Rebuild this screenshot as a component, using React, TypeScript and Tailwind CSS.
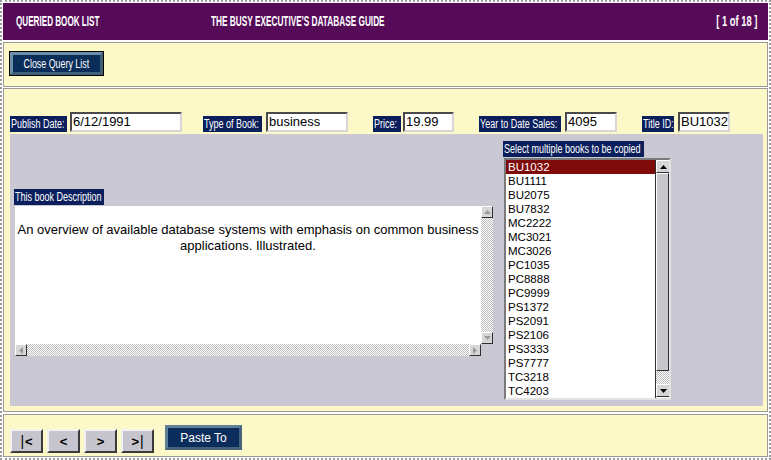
import React from 'react';

const books = [
  'BU1032', 'BU1111', 'BU2075', 'BU7832', 'MC2222', 'MC3021', 'MC3026', 'PC1035', 'PC8888',
  'PC9999', 'PS1372', 'PS2091', 'PS2106', 'PS3333', 'PS7777', 'TC3218', 'TC4203',
];

function Tri({ dir, faded }: { dir: 'up' | 'down' | 'left' | 'right'; faded?: boolean }) {
  const pts = {
    up: '0,4 3.5,0 7,4',
    down: '0,0 7,0 3.5,4',
    left: '4,0 4,7 0,3.5',
    right: '0,0 0,7 4,3.5',
  }[dir];
  const vertical = dir === 'up' || dir === 'down';
  return (
    <svg width={vertical ? 7 : 4} height={vertical ? 4 : 7} viewBox={vertical ? '0 0 7 4' : '0 0 4 7'}>
      <polygon points={pts} fill={faded ? '#9a9a9a' : '#000'} />
    </svg>
  );
}

function ArrowBtn({ dir, faded, big }: { dir: 'up' | 'down' | 'left' | 'right'; faded?: boolean; big?: boolean }) {
  return (
    <div
      className={`${big ? 'w-[14px] h-[13px]' : 'w-[12px] h-[12px]'} shrink-0 flex items-center justify-center bg-[#d6d6d6] border border-t-white border-l-white border-b-[#303030] border-r-[#303030]`}
    >
      <Tri dir={dir} faded={faded} />
    </div>
  );
}

const checker = 'bg-[repeating-conic-gradient(#bdbdbd_0_25%,#ffffff_0_50%)] bg-[length:2px_2px]';

function Label({ text, w }: { text: string; w: string }) {
  return (
    <div className={`${w} h-[16px] bg-[#0b1f5c] text-white text-[12px] leading-[16px] pl-[1px] overflow-hidden whitespace-nowrap shrink-0`}>
      <span className="inline-block origin-left scale-x-[0.75]">{text}</span>
    </div>
  );
}

function Field({ value, w }: { value: string; w: string }) {
  return (
    <div className={`${w} h-[20px] bg-white border-2 border-t-[#4a4a4a] border-l-[#4a4a4a] border-b-[#d6d6d6] border-r-[#d6d6d6] text-[13px] leading-[16px] pl-[1px] text-black whitespace-nowrap overflow-hidden shrink-0`}>
      {value}
    </div>
  );
}

function NavBtn({ children }: { children: React.ReactNode }) {
  return (
    <div className="w-[33px] h-[24px] flex items-center justify-center bg-[#c6c4cc] border-2 border-t-[#f2f2f2] border-l-[#f2f2f2] border-b-[#3a3a3a] border-r-[#3a3a3a] text-black text-[13px] font-bold leading-none">
      {children}
    </div>
  );
}

export default function App() {
  return (
    <div className="w-[771px] h-[460px] bg-white border-2 border-dotted border-[#9a9a9a] p-[1px] flex flex-col font-['Liberation_Sans',Arial,sans-serif] overflow-hidden">
      {/* Header */}
      <div className="h-[37px] shrink-0 bg-[#560b59] flex items-center text-white text-[14px] font-bold whitespace-nowrap">
        <div className="w-[208px] pl-[13px]">
          <span className="inline-block origin-left scale-x-[0.58]">QUERIED BOOK LIST</span>
        </div>
        <div className="flex-1">
          <span className="inline-block origin-left scale-x-[0.59]">THE BUSY EXECUTIVE'S DATABASE GUIDE</span>
        </div>
        <div className="pr-[11px]">
          <span className="inline-block origin-right scale-x-[0.67]">[ 1 of 18 ]</span>
        </div>
      </div>

      {/* Close button panel */}
      <div className="mt-[2px] h-[45px] shrink-0 bg-[#fcf8c8] border border-[#9a9a9a] pl-[5px] pt-[8px]">
        <div className="w-[95px] h-[25px] border border-black">
          <div className="w-full h-full bg-[#0b2d5a] border-[3px] border-t-[#6f8ea8] border-l-[#6f8ea8] border-b-[#40607a] border-r-[#40607a] flex items-center justify-center text-white text-[12px] whitespace-nowrap">
            <span className="inline-block scale-x-[0.74]">Close Query List</span>
          </div>
        </div>
      </div>

      {/* Main panel */}
      <div className="mt-[1px] h-[324px] shrink-0 bg-[#fcf8c8] border border-[#9a9a9a] pl-[6px] pt-[23px]">
        <div className="flex items-end h-[20px]">
          <Label text="Publish Date:" w="w-[57px]" />
          <div className="ml-[3px]"><Field value="6/12/1991" w="w-[112px]" /></div>
          <div className="ml-[21px]"><Label text="Type of Book:" w="w-[59px]" /></div>
          <div className="ml-[4px]"><Field value="business" w="w-[82px]" /></div>
          <div className="ml-[25px]"><Label text="Price:" w="w-[28px]" /></div>
          <div className="ml-[2px]"><Field value="19.99" w="w-[51px]" /></div>
          <div className="ml-[25px]"><Label text="Year to Date Sales:" w="w-[82px]" /></div>
          <div className="ml-[4px]"><Field value="4095" w="w-[52px]" /></div>
          <div className="ml-[25px]"><Label text="Title ID:" w="w-[32px]" /></div>
          <div className="ml-[4px]"><Field value="BU1032" w="w-[52px]" /></div>
        </div>

        <div className="mt-[2px] w-[753px] h-[272px] bg-[#cac8d3] flex">
          {/* Description */}
          <div className="w-[493px] shrink-0 pl-[4px] pt-[55px]">
            <Label text="This book Description" w="w-[90px]" />
            <div className="ml-[1px] mt-[1px] w-[478px]">
              <div className="flex">
                <div className="w-[466px] h-[138px] bg-white text-black text-[13px] leading-[16px] text-center pt-[16px] px-[1px]">
                  An overview of available database systems with emphasis on common business applications. Illustrated.
                </div>
                <div className="w-[12px] h-[138px] flex flex-col">
                  <ArrowBtn dir="up" faded />
                  <div className={`flex-1 ${checker}`} />
                  <ArrowBtn dir="down" faded />
                </div>
              </div>
              <div className="flex w-[466px] h-[12px]">
                <ArrowBtn dir="left" faded />
                <div className={`flex-1 ${checker}`} />
                <ArrowBtn dir="right" faded />
              </div>
            </div>
          </div>

          {/* Book list */}
          <div className="pt-[7px]">
            <Label text="Select multiple books to be copied" w="w-[141px]" />
            <div className="ml-[1px] mt-[1px] w-[167px] h-[242px] bg-white border-2 border-t-[#7a7a7a] border-l-[#7a7a7a] border-b-[#e2e2e2] border-r-[#e2e2e2] flex overflow-hidden">
              <div className="w-[149px] text-[11.5px] leading-[14px] text-black">
                {books.map((b, i) => (
                  <div key={b} className={`h-[14px] pl-[2px] ${i === 0 ? 'bg-[#7e0a0a] text-white' : ''}`}>
                    {b}
                  </div>
                ))}
              </div>
              <div className="w-[14px] flex flex-col border-l border-[#303030]">
                <ArrowBtn dir="up" big />
                <div className="h-[198px] bg-[#c8c6cc] border border-t-white border-l-white border-b-[#303030] border-r-[#303030]" />
                <div className={`h-[13px] ${checker}`} />
                <ArrowBtn dir="down" big />
              </div>
            </div>
          </div>
        </div>
      </div>

      {/* Bottom panel */}
      <div className="mt-[2px] h-[43px] shrink-0 bg-[#fcf8c8] border border-[#9a9a9a] pl-[6px] pt-[10px] flex items-start">
        <div className="mt-[4px] flex gap-[4px]">
          <NavBtn><span className="font-normal text-[14px] mr-[1px]">|</span>&lt;</NavBtn>
          <NavBtn>&lt;</NavBtn>
          <NavBtn>&gt;</NavBtn>
          <NavBtn>&gt;<span className="font-normal text-[14px] ml-[1px]">|</span></NavBtn>
        </div>
        <div className="ml-[11px] w-[77px] h-[25px] bg-[#0b2d5c] border-[3px] border-t-[#5f7f98] border-l-[#5f7f98] border-b-[#44627a] border-r-[#44627a] flex items-center justify-center text-white text-[12px]">
          Paste To
        </div>
      </div>
    </div>
  );
}
